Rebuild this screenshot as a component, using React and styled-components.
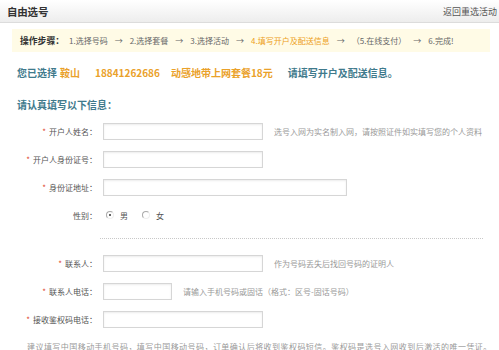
import React from "react";
import styled, { createGlobalStyle } from "styled-components";

const Global = createGlobalStyle`
  html, body { margin: 0; padding: 0; background: #fff; overflow: hidden; }
  body { font-family: "Noto Sans CJK SC", "Noto Sans", sans-serif; color: #555; }
`;

const Page = styled.div`
  width: 499px;
  height: 350px;
  overflow: hidden;
`;

const Header = styled.div`
  height: 23px;
  box-sizing: border-box;
  display: flex;
  align-items: center;
  justify-content: space-between;
  padding: 0 2px 0 7px;
  background: linear-gradient(#ffffff, #ededed);
  border-bottom: 1px solid #dcdcdc;
  white-space: nowrap;
`;

const Title = styled.div`
  font-size: 10.5px;
  font-weight: bold;
  color: #333;
  letter-spacing: -0.2px;
`;

const Back = styled.div`
  font-size: 9px;
  color: #555;
`;

const Steps = styled.div`
  margin: 6px 9px 0 12px;
  height: 23px;
  background: #fffbe6;
  display: flex;
  align-items: center;
  padding-left: 8px;
  font-size: 8px;
  white-space: nowrap;
  color: #666;
`;

const StepLabel = styled.span`
  font-weight: bold;
  font-size: 8.8px;
  color: #333;
  margin-right: 5px;
`;

const Step = styled.span`
  color: ${(p) => (p.$current ? "#eda020" : "#666")};
`;

const Arrow = styled.span`
  color: #666;
  margin: 0 7px 0 7px;
  font-size: 8px;
`;

const Chosen = styled.div`
  margin-top: 14px;
  padding-left: 17px;
  height: 14px;
  line-height: 14px;
  font-size: 10px;
  font-weight: bold;
  color: #3f7a8c;
  white-space: nowrap;
`;

const Hi = styled.span`
  color: #eaa12a;
  margin-left: ${(p) => p.$gap || 0}px;
`;

const Plain = styled.span`
  margin-left: ${(p) => p.$gap || 0}px;
`;

const Section = styled.div`
  margin-top: 18px;
  padding-left: 17px;
  height: 14px;
  line-height: 14px;
  font-size: 10px;
  font-weight: bold;
  color: #3f7a8c;
`;

const Form = styled.div`
  margin-top: 5px;
`;

const Row = styled.div`
  height: 28px;
  display: flex;
  align-items: center;
  white-space: nowrap;
`;

const Label = styled.div`
  width: 97px;
  text-align: right;
  font-size: 8px;
  color: #555;
  flex-shrink: 0;
`;

const Star = styled.span`
  color: #e0452a;
  margin-right: 3px;
`;

const Input = styled.div`
  margin-left: 6px;
  width: ${(p) => p.$w}px;
  height: 17px;
  box-sizing: border-box;
  border: 1px solid #d6d6d6;
  box-shadow: inset 0 1px 2px rgba(0, 0, 0, 0.08);
  background: #fff;
  flex-shrink: 0;
`;

const Hint = styled.div`
  margin-left: 11px;
  font-size: 8px;
  color: #999;
`;

const Radios = styled.div`
  margin-left: 9px;
  display: flex;
  align-items: center;
  font-size: 8px;
  color: #555;
`;

const Radio = styled.span`
  width: 6px;
  height: 6px;
  border-radius: 50%;
  border: 1px solid #aaa;
  border-right-color: #eee;
  border-bottom-color: #eee;
  position: relative;
  margin-right: 6px;
  margin-left: ${(p) => p.$gap || 0}px;
  &::after {
    content: "";
    display: ${(p) => (p.$on ? "block" : "none")};
    position: absolute;
    left: 2px;
    top: 2px;
    width: 2px;
    height: 2px;
    border-radius: 50%;
    background: #333;
  }
`;

const Divider = styled.div`
  margin: 9px 16px 10px 100px;
  border-top: 1px dotted #c8c8c8;
`;

const Note = styled.div`
  margin-top: 7px;
  padding-left: 27px;
  font-size: 8px;
  letter-spacing: 0.45px;
  line-height: 14px;
  color: #999;
  white-space: nowrap;
`;

export default function App() {
  return (
    <Page>
      <Global />
      <Header>
        <Title>自由选号</Title>
        <Back>返回重选活动</Back>
      </Header>
      <Steps>
        <StepLabel>操作步骤：</StepLabel>
        <Step>1.选择号码</Step>
        <Arrow>→</Arrow>
        <Step>2.选择套餐</Step>
        <Arrow>→</Arrow>
        <Step>3.选择活动</Step>
        <Arrow>→</Arrow>
        <Step $current>4.填写开户及配送信息</Step>
        <Arrow>→</Arrow>
        <Step>（5.在线支付）</Step>
        <Arrow>→</Arrow>
        <Step>6.完成!</Step>
      </Steps>
      <Chosen>
        您已选择
        <Hi $gap={3}>鞍山</Hi>
        <Hi $gap={15}>18841262686</Hi>
        <Hi $gap={11}>动感地带上网套餐18元</Hi>
        <Plain $gap={15}>请填写开户及配送信息。</Plain>
      </Chosen>
      <Section>请认真填写以下信息：</Section>
      <Form>
        <Row>
          <Label><Star>*</Star>开户人姓名：</Label>
          <Input $w={160} />
          <Hint>选号入网为实名制入网，请按照证件如实填写您的个人资料</Hint>
        </Row>
        <Row>
          <Label><Star>*</Star>开户人身份证号：</Label>
          <Input $w={160} />
        </Row>
        <Row>
          <Label><Star>*</Star>身份证地址：</Label>
          <Input $w={244} />
        </Row>
        <Row>
          <Label>性别：</Label>
          <Radios>
            <Radio $on />男
            <Radio $gap={14} />女
          </Radios>
        </Row>
        <Divider />
        <Row>
          <Label><Star>*</Star>联系人：</Label>
          <Input $w={160} />
          <Hint>作为号码丢失后找回号码的证明人</Hint>
        </Row>
        <Row>
          <Label><Star>*</Star>联系人电话：</Label>
          <Input $w={69} />
          <Hint>请输入手机号码或固话（格式：区号-固话号码）</Hint>
        </Row>
        <Row>
          <Label><Star>*</Star>接收鉴权码电话：</Label>
          <Input $w={160} />
        </Row>
      </Form>
      <Note>建议填写中国移动手机号码，填写中国移动号码，订单确认后将收到鉴权码短信。鉴权码是选号入网收到后激活的唯一凭证。</Note>
    </Page>
  );
}
